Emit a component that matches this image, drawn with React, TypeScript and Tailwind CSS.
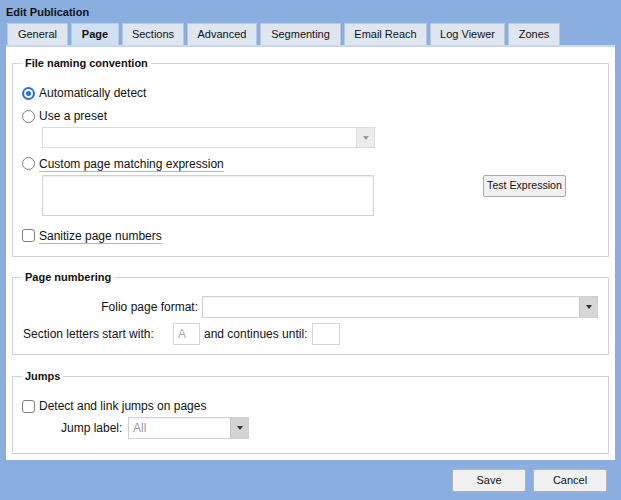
import React from "react";

function Radio({ checked }: { checked?: boolean }) {
  return checked ? (
    <span className="w-[13px] h-[13px] rounded-full bg-[#2a6fe0] flex items-center justify-center shrink-0">
      <span className="w-[9px] h-[9px] rounded-full bg-white flex items-center justify-center">
        <span className="w-[5px] h-[5px] rounded-full bg-[#2a6fe0]" />
      </span>
    </span>
  ) : (
    <span className="w-[13px] h-[13px] rounded-full border border-[#7d7d7d] bg-white shrink-0" />
  );
}

function Check() {
  return <span className="w-[13px] h-[13px] rounded-[3px] border border-[#7d7d7d] bg-white shrink-0" />;
}

function Arrow({ color }: { color: string }) {
  return (
    <span
      className="w-0 h-0 border-x-[3.5px] border-x-transparent border-t-[4px]"
      style={{ borderTopColor: color }}
    />
  );
}

const tabs: [string, number][] = [
  ["General", 61],
  ["Page", 48],
  ["Sections", 62],
  ["Advanced", 70],
  ["Segmenting", 81],
  ["Email Reach", 83],
  ["Log Viewer", 75],
  ["Zones", 52],
];

export default function App() {
  return (
    <div className="w-[621px] h-[500px] bg-[#8aaee0] font-['Liberation_Sans',Arial,sans-serif] text-[12px] text-[#111] overflow-hidden">
      <div className="h-[23px] pl-[6px] pt-[5px] font-bold text-[11px] leading-[14px]">Edit Publication</div>
      <div className="flex gap-[3px] pl-[7px] h-[22px]">
        {tabs.map(([t, w]) => (
          <div
            key={t}
            style={{ width: w }}
            className={
              "h-[22px] border border-b-0 border-[#b5c9e4] flex items-center justify-center text-[11px] " +
              (t === "Page" ? "bg-[#cfe0f3] font-bold" : "bg-[#dfe6f0]")
            }
          >
            {t}
          </div>
        ))}
      </div>
      <div className="ml-[6px] w-[609px] h-[415px] bg-white border-t-2 border-[#c6d9f0] px-[6px] pt-[9px]">
        <fieldset className="border border-[#d2d2de] pl-[9px] pr-[10px] pt-[12px] pb-[10px]">
          <legend className="ml-0 px-[3px] font-bold text-[11px] leading-[14px]">File naming convention</legend>
          <div className="h-[22px] flex items-center gap-[4px]">
            <Radio checked />
            <span>Automatically detect</span>
          </div>
          <div className="h-[22px] mt-[1px] flex items-center gap-[4px]">
            <Radio />
            <span>Use a preset</span>
          </div>
          <div className="ml-[20px] w-[333px] h-[21px] border border-[#dcdcdc] bg-white flex justify-end">
            <div className="w-[18px] h-full bg-[#ececec] border-l border-[#dcdcdc] flex items-center justify-center">
              <Arrow color="#9a9a9a" />
            </div>
          </div>
          <div className="h-[22px] mt-[4px] flex items-center gap-[4px]">
            <Radio />
            <span className="border-b border-[#aeaef4] leading-[14px] mt-[2px]">Custom page matching expression</span>
          </div>
          <div className="flex items-start mt-[1px]">
            <div className="ml-[20px] w-[332px] h-[41px] border border-[#cfcfdd] bg-white shadow-[inset_0_1px_2px_rgba(0,0,0,0.08)]" />
            <button className="ml-[109px] w-[83px] h-[22px] border border-[#a9a9a9] bg-[#f1f1f1] text-[10.6px] text-[#111] rounded-[2px]">
              Test Expression
            </button>
          </div>
          <div className="h-[22px] mt-[8px] flex items-center gap-[4px]">
            <Check />
            <span className="border-b border-[#aeaef4] leading-[14px] mt-[2px]">Sanitize page numbers</span>
          </div>
        </fieldset>

        <fieldset className="mt-[13px] border border-[#d2d2de] pl-[10px] pr-[10px] pt-[12px] pb-[9px]">
          <legend className="-ml-[1px] px-[3px] font-bold text-[11px] leading-[14px]">Page numbering</legend>
          <div className="h-[22px] flex items-center">
            <span className="w-[179px] text-right pr-[4px]">Folio page format:</span>
            <div className="w-[396px] h-[22px] border border-[#cfcfdd] bg-white flex justify-end shadow-[inset_0_1px_2px_rgba(0,0,0,0.06)]">
              <div className="w-[18px] h-full bg-[#d7d7d7] border-l border-[#c8c8c8] flex items-center justify-center">
                <Arrow color="#333" />
              </div>
            </div>
          </div>
          <div className="h-[22px] mt-[5px] flex items-center">
            <span className="w-[150px]">Section letters start with:</span>
            <div className="w-[27px] h-[22px] border border-[#d6d6e0] bg-white text-[#aaa] pl-[4px] leading-[20px]">A</div>
            <span className="ml-[4px]">and continues until:</span>
            <div className="ml-[5px] w-[28px] h-[22px] border border-[#d6d6e0] bg-white" />
          </div>
        </fieldset>

        <fieldset className="mt-[14px] border border-[#d2d2de] pl-[9px] pr-[10px] pt-[12px] pb-[14px]">
          <legend className="ml-0 px-[3px] font-bold text-[11px] leading-[14px]">Jumps</legend>
          <div className="h-[22px] flex items-center gap-[4px]">
            <Check />
            <span>Detect and link jumps on pages</span>
          </div>
          <div className="h-[22px] flex items-center">
            <span className="ml-[39px] w-[67px]">Jump label:</span>
            <div className="w-[121px] h-[22px] border border-[#cfcfdd] bg-white flex shadow-[inset_0_1px_2px_rgba(0,0,0,0.06)]">
              <span className="flex-1 pl-[4px] leading-[20px] text-[#9a9a9a]">All</span>
              <div className="w-[18px] h-full bg-[#d4d4d4] border-l border-[#c4c4c4] flex items-center justify-center">
                <Arrow color="#333" />
              </div>
            </div>
          </div>
        </fieldset>
      </div>
      <div className="flex justify-end gap-[7px] pr-[14px] mt-[9px]">
        <button className="w-[74px] h-[23px] border border-[#b4b4b4] bg-[#f1f1f1] text-[11px] text-[#111] rounded-[2px]">Save</button>
        <button className="w-[74px] h-[23px] border border-[#b4b4b4] bg-[#f1f1f1] text-[11px] text-[#111] rounded-[2px]">Cancel</button>
      </div>
    </div>
  );
}
